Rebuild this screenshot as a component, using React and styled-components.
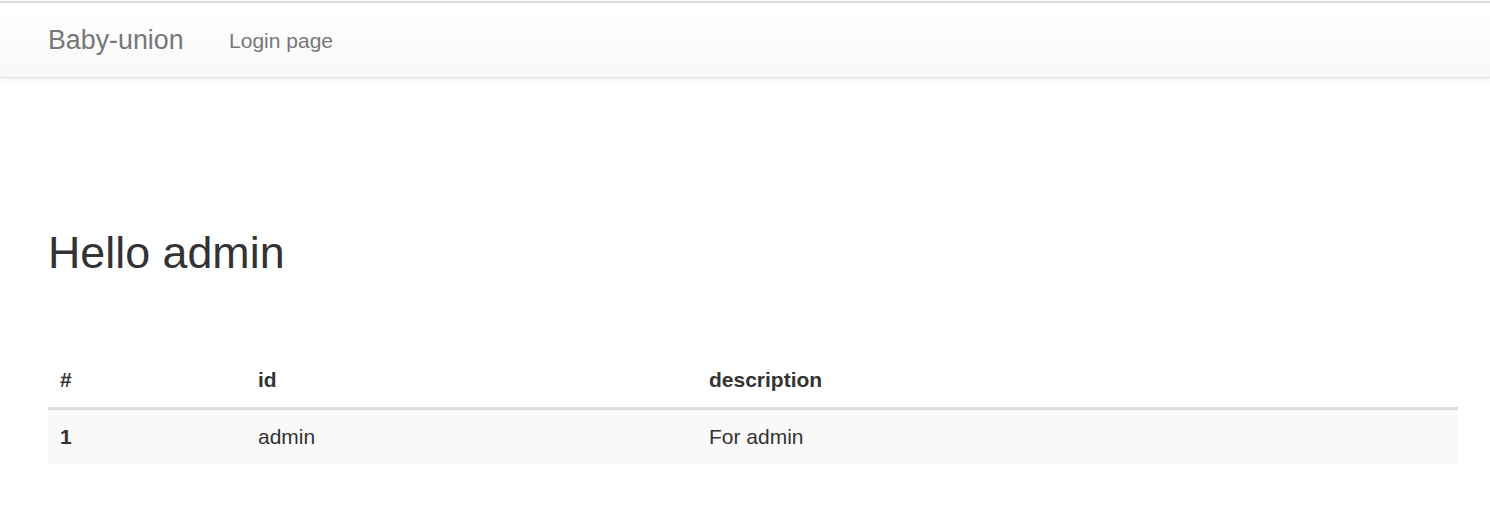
import styled, { createGlobalStyle } from 'styled-components'

const GlobalStyle = createGlobalStyle`
  body {
    margin: 0;
    background: #fff;
    font-family: "Liberation Sans", Arial, Helvetica, sans-serif;
    font-size: 21px;
    line-height: 30px;
    color: #333;
  }
`

const Navbar = styled.nav`
  margin-top: 1px;
  height: 74px;
  display: flex;
  align-items: stretch;
  padding-left: 25px;
  border-top: 2px solid #dcdcdc;
  border-bottom: 1px solid #e2e2e2;
  background-image: linear-gradient(to bottom, #fff 0%, #f8f8f8 100%);
  box-shadow: inset 0 1px 0 rgba(255, 255, 255, 0.15), 0 1.5px 7px rgba(0, 0, 0, 0.075);
`
const Brand = styled.a`
  padding: 22px 23px 21px 23px;
  font-size: 26.8px;
  line-height: 30px;
  color: #777;
  text-decoration: none;
`
const NavLink = styled.a`
  padding: 23px 22.5px 21px;
  font-size: 21px;
  line-height: 30px;
  color: #777;
  text-decoration: none;
`

const Container = styled.main`
  padding: 0 32px 0 48px;
`
const Title = styled.h1`
  margin: 150px 0 0;
  font-size: 44.8px;
  line-height: 49.5px;
  font-weight: 500;
  color: #333;
`
const Table = styled.table`
  margin-top: 75.5px;
  width: 100%;
  border-collapse: collapse;
  border-spacing: 0;
`
const Th = styled.th`
  width: ${(props) => props.width || 'auto'};
  padding: 12px;
  text-align: left;
  vertical-align: bottom;
  font-weight: bold;
  line-height: 30px;
  border-bottom: 3px solid #ddd;
`
const Row = styled.tr`
  background: ${(props) => (props.striped ? '#f9f9f9' : 'transparent')};
`
const Cell = styled.td`
  padding: 12px;
  line-height: 30px;
  font-weight: ${(props) => (props.bold ? 'bold' : 'normal')};
`

const rows = [{ n: 1, id: 'admin', description: 'For admin' }]

export default function App() {
  return (
    <>
      <GlobalStyle />
      <Navbar>
        <Brand href="#">Baby-union</Brand>
        <NavLink href="#">Login page</NavLink>
      </Navbar>
      <Container>
        <Title>Hello admin</Title>
        <Table>
          <thead>
            <tr>
              <Th width="174px">#</Th>
              <Th width="427px">id</Th>
              <Th>description</Th>
            </tr>
          </thead>
          <tbody>
            {rows.map((r, i) => (
              <Row key={r.n} striped={i % 2 === 0}>
                <Cell bold>{r.n}</Cell>
                <Cell>{r.id}</Cell>
                <Cell>{r.description}</Cell>
              </Row>
            ))}
          </tbody>
        </Table>
      </Container>
    </>
  )
}
